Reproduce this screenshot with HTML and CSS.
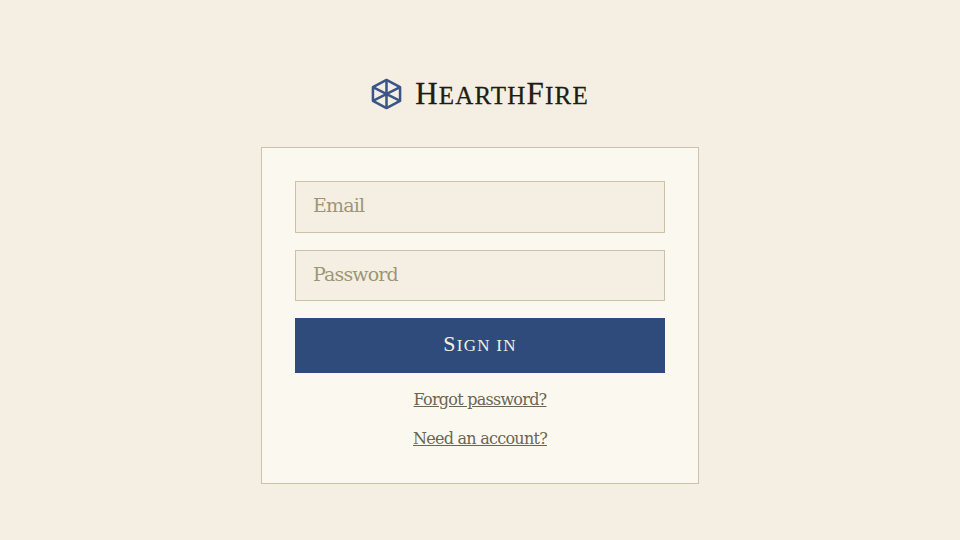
FILE: index.html
```html
<!DOCTYPE html>
<html lang="en">
<head>
  <meta charset="UTF-8">
  <meta name="viewport" content="width=device-width, initial-scale=1.0">
  <title>HearthFire</title>
  <link rel="stylesheet" href="styles.css">
</head>
<body>
  <main>
    <header class="brand">
      <svg class="brand-icon" viewBox="0 0 32 32" fill="none" stroke="#3a5688" stroke-width="2.6" stroke-linejoin="round" aria-hidden="true">
        <path d="M16 1.5 30 9V23L16 30.5 2 23V9Z"/>
        <path d="M16 1.5V30.5M2 9 30 23M30 9 2 23"/>
      </svg>
      <span class="brand-name"><span class="initial">H</span>earth<span class="initial">F</span>ire</span>
    </header>
    <form class="card">
      <input class="field" type="text" placeholder="Email">
      <input class="field" type="password" placeholder="Password">
      <button class="submit" type="button"><span class="initial">S</span>ign in</button>
      <nav class="links">
        <a href="#forgot">Forgot password?</a>
        <a href="#register">Need an account?</a>
      </nav>
    </form>
  </main>
</body>
</html>
```

FILE: styles.css
```css
* { box-sizing: border-box; }

html, body {
  height: 100%;
  margin: 0;
}

body {
  background: #f5efe3;
  font-family: "DejaVu Serif", serif;
  overflow: hidden;
}

main {
  display: flex;
  flex-direction: column;
  align-items: center;
  padding-top: 76px;
}

.brand {
  display: flex;
  align-items: center;
  gap: 13px;
  height: 36px;
  margin-bottom: 35px;
}

.brand-icon {
  width: 31px;
  height: 32px;
}

.brand-name {
  font-family: "Liberation Serif", serif;
  font-size: 25px;
  letter-spacing: 1.2px;
  text-transform: uppercase;
  color: #1f1c14;
  -webkit-text-stroke: 0.3px #1f1c14;
}

.brand-name .initial { font-size: 31px; }

.card {
  display: flex;
  flex-direction: column;
  width: 438px;
  height: 337px;
  padding: 33px;
  background: #fbf8f0;
  border: 1px solid #c9c4a6;
}

.field {
  width: 100%;
  height: 51.5px;
  margin-bottom: 17px;
  padding: 0 17px 3px;
  background: #f5efe3;
  border: 1px solid #c9c4a6;
  border-radius: 0;
  font-family: inherit;
  font-size: 19px;
  letter-spacing: -0.85px;
}

.field::placeholder {
  color: #9c9678;
  opacity: 1;
}

.submit {
  height: 55px;
  padding: 0 0 4px;
  background: #2f4b7c;
  border: 0;
  color: #f5efe3;
  font-family: "Liberation Serif", serif;
  font-size: 17px;
  letter-spacing: 1.3px;
  text-transform: uppercase;
}

.submit .initial { font-size: 22px; }

.links {
  display: flex;
  flex-direction: column;
  align-items: center;
  gap: 17px;
  margin-top: 16px;
}

.links a {
  color: #6b6650;
  font-size: 16px;
  line-height: 22px;
  letter-spacing: -0.75px;
}
```
